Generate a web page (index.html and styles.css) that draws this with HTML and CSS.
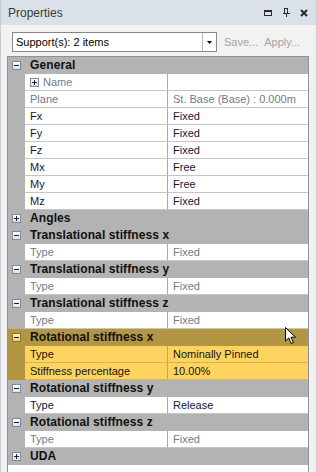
FILE: index.html
```html
<!DOCTYPE html>
<html>
<head>
  <meta charset="UTF-8" />
  <title>Properties</title>
  <link rel="stylesheet" href="styles.css">
</head>
<body>
  <div class="panel">
    <div class="titlebar">
      <span class="title">Properties</span>
      <div class="title-icons">
        <svg class="ticon" width="18" height="16" viewBox="0 0 18 16">
          <rect x="5.5" y="5.5" width="7" height="5" fill="none" stroke="#2b2b2b" stroke-width="1"/>
          <rect x="5" y="5" width="8" height="2" fill="#2b2b2b"/>
        </svg>
        <svg class="ticon" width="18" height="16" viewBox="0 0 18 16">
          <rect x="7.5" y="3.5" width="3" height="5" fill="none" stroke="#2b2b2b" stroke-width="1"/>
          <rect x="10" y="3" width="1" height="6" fill="#2b2b2b"/>
          <rect x="6" y="8" width="7" height="1" fill="#2b2b2b"/>
          <rect x="9" y="9" width="1" height="3" fill="#2b2b2b"/>
        </svg>
        <svg class="ticon" width="18" height="16" viewBox="0 0 18 16">
          <path d="M6 5 L12 11 M12 5 L6 11" stroke="#2b2b2b" stroke-width="2" fill="none"/>
        </svg>
      </div>
    </div>

    <div class="toolbar">
      <div class="combo">
        <span class="combo-text">Support(s): 2 items</span>
        <span class="combo-btn">
          <svg width="5" height="3" viewBox="0 0 5 3"><polygon points="0,0 5,0 2.5,3" fill="#000"/></svg>
        </span>
      </div>
      <span class="tool-link save">Save...</span>
      <span class="tool-link apply">Apply...</span>
    </div>

    <div class="grid">
      <div class="cat"><div class="gutter"><span class="exp"></span></div><div class="cat-label">General</div></div>
      <div class="prop">
        <div class="gutter"></div>
        <div class="name with-exp dim"><span class="exp plus"></span>Name</div>
        <div class="value"></div>
      </div>
      <div class="prop"><div class="gutter"></div><div class="name dim">Plane</div><div class="value dim">St. Base (Base) : 0.000m</div></div>
      <div class="prop"><div class="gutter"></div><div class="name">Fx</div><div class="value">Fixed</div></div>
      <div class="prop"><div class="gutter"></div><div class="name">Fy</div><div class="value">Fixed</div></div>
      <div class="prop"><div class="gutter"></div><div class="name">Fz</div><div class="value">Fixed</div></div>
      <div class="prop"><div class="gutter"></div><div class="name">Mx</div><div class="value">Free</div></div>
      <div class="prop"><div class="gutter"></div><div class="name">My</div><div class="value">Free</div></div>
      <div class="prop"><div class="gutter"></div><div class="name">Mz</div><div class="value">Fixed</div></div>

      <div class="cat"><div class="gutter"><span class="exp plus"></span></div><div class="cat-label">Angles</div></div>

      <div class="cat"><div class="gutter"><span class="exp"></span></div><div class="cat-label">Translational stiffness x</div></div>
      <div class="prop"><div class="gutter"></div><div class="name dim">Type</div><div class="value dim">Fixed</div></div>

      <div class="cat"><div class="gutter"><span class="exp"></span></div><div class="cat-label">Translational stiffness y</div></div>
      <div class="prop"><div class="gutter"></div><div class="name dim">Type</div><div class="value dim">Fixed</div></div>

      <div class="cat"><div class="gutter"><span class="exp"></span></div><div class="cat-label">Translational stiffness z</div></div>
      <div class="prop"><div class="gutter"></div><div class="name dim">Type</div><div class="value dim">Fixed</div></div>

      <div class="cat sel"><div class="gutter"><span class="exp"></span></div><div class="cat-label">Rotational stiffness x</div></div>
      <div class="prop sel"><div class="gutter"></div><div class="name">Type</div><div class="value">Nominally Pinned</div></div>
      <div class="prop sel"><div class="gutter"></div><div class="name">Stiffness percentage</div><div class="value">10.00%</div></div>

      <div class="cat"><div class="gutter"><span class="exp"></span></div><div class="cat-label">Rotational stiffness y</div></div>
      <div class="prop"><div class="gutter"></div><div class="name">Type</div><div class="value">Release</div></div>

      <div class="cat"><div class="gutter"><span class="exp"></span></div><div class="cat-label">Rotational stiffness z</div></div>
      <div class="prop"><div class="gutter"></div><div class="name dim">Type</div><div class="value dim">Fixed</div></div>

      <div class="cat"><div class="gutter"><span class="exp plus"></span></div><div class="cat-label">UDA</div></div>
    </div>
  </div>

  <svg class="cursor" width="13" height="18" viewBox="0 0 13 18">
    <path d="M0.5 0.5 L0.5 14 L3.8 10.9 L6.2 16.5 L8.4 15.6 L6 10.2 L10.5 10.2 Z" fill="#fff" stroke="#000" stroke-width="1" stroke-linejoin="miter"/>
  </svg>
</body>
</html>
```

FILE: styles.css
```css
body {
  margin: 0;
  font-family: "Liberation Sans", Arial, sans-serif;
  font-size: 11px;
  background: #f2f2f2;
}
.panel {
  width: 317px;
  height: 472px;
  box-sizing: border-box;
  border-left: 1px solid #c6cbd2;
  border-right: 1px solid #c6cbd2;
  background: #f2f2f2;
  display: flex;
  flex-direction: column;
  overflow: hidden;
}
.titlebar {
  height: 25px;
  flex: none;
  background: #dae1e9;
  display: flex;
  align-items: center;
  padding: 0 3px 0 7px;
}
.title {
  flex: 1;
  font-size: 12px;
  color: #3a3a3a;
}
.title-icons {
  display: flex;
}
.ticon {
  display: block;
}
.toolbar {
  height: 31px;
  flex: none;
  box-sizing: border-box;
  display: flex;
  align-items: flex-start;
  padding: 7px 0 0 11px;
}
.combo {
  width: 205px;
  height: 20px;
  box-sizing: border-box;
  border: 1px solid #85888f;
  background: #fff;
  display: flex;
}
.combo-text {
  flex: 1;
  padding-left: 3px;
  line-height: 18px;
  color: #000;
}
.combo-btn {
  width: 14px;
  box-sizing: border-box;
  border-left: 1px solid #b9b9b9;
  display: flex;
  align-items: center;
  justify-content: center;
}
.combo-btn svg {
  display: block;
}
.tool-link {
  color: #a4a4a4;
  line-height: 20px;
}
.save {
  margin-left: 7px;
}
.apply {
  margin-left: 6px;
}
.grid {
  flex: 1;
  margin-left: 6px;
  width: 302px;
  box-sizing: border-box;
  border: 1px solid #8d929a;
  border-bottom: none;
  background: #fff;
}
.cat {
  display: flex;
  height: 17px;
  background: #b3b3b3;
}
.gutter {
  width: 17px;
  flex: none;
  display: flex;
  align-items: center;
  justify-content: center;
}
.cat-label {
  padding-left: 5px;
  font-weight: bold;
  font-size: 12px;
  letter-spacing: 0.1px;
  line-height: 17px;
  color: #101010;
  white-space: nowrap;
}
.prop {
  display: flex;
  height: 17px;
  background: #b3b3b3;
  color: #16163a;
}
.name {
  width: 143px;
  flex: none;
  box-sizing: border-box;
  background: #fff;
  border-right: 1px solid #ababab;
  border-bottom: 1px solid #c6c6c6;
  padding-left: 5px;
  line-height: 16px;
  white-space: nowrap;
}
.with-exp {
  display: flex;
  align-items: center;
  gap: 4px;
}
.value {
  flex: 1;
  background: #fff;
  border-bottom: 1px solid #c6c6c6;
  padding-left: 5px;
  line-height: 16px;
  white-space: nowrap;
}
.dim {
  color: #707b8b;
}
.exp {
  width: 9px;
  height: 9px;
  flex: none;
  box-sizing: border-box;
  border: 1px solid #7e8aa0;
  background: linear-gradient(#ffffff, #dde1e8);
  position: relative;
}
.exp::before {
  content: "";
  position: absolute;
  left: 1px;
  top: 3px;
  width: 5px;
  height: 1px;
  background: #1f1f2f;
}
.exp.plus::after {
  content: "";
  position: absolute;
  left: 3px;
  top: 1px;
  width: 1px;
  height: 5px;
  background: #1f1f2f;
}
.cat.sel,
.prop.sel {
  background: #b39643;
}
.cat.sel .exp {
  border-color: #8a7430;
  background: linear-gradient(#fff3c4, #f0cf68);
}
.prop.sel .name,
.prop.sel .value {
  background: #fed35f;
  border-bottom-color: #d9b44c;
}
.prop.sel .name {
  border-right-color: #c9a748;
}
.prop.sel {
  color: #141414;
}
.cursor {
  position: absolute;
  left: 285px;
  top: 327px;
  display: block;
}
```
